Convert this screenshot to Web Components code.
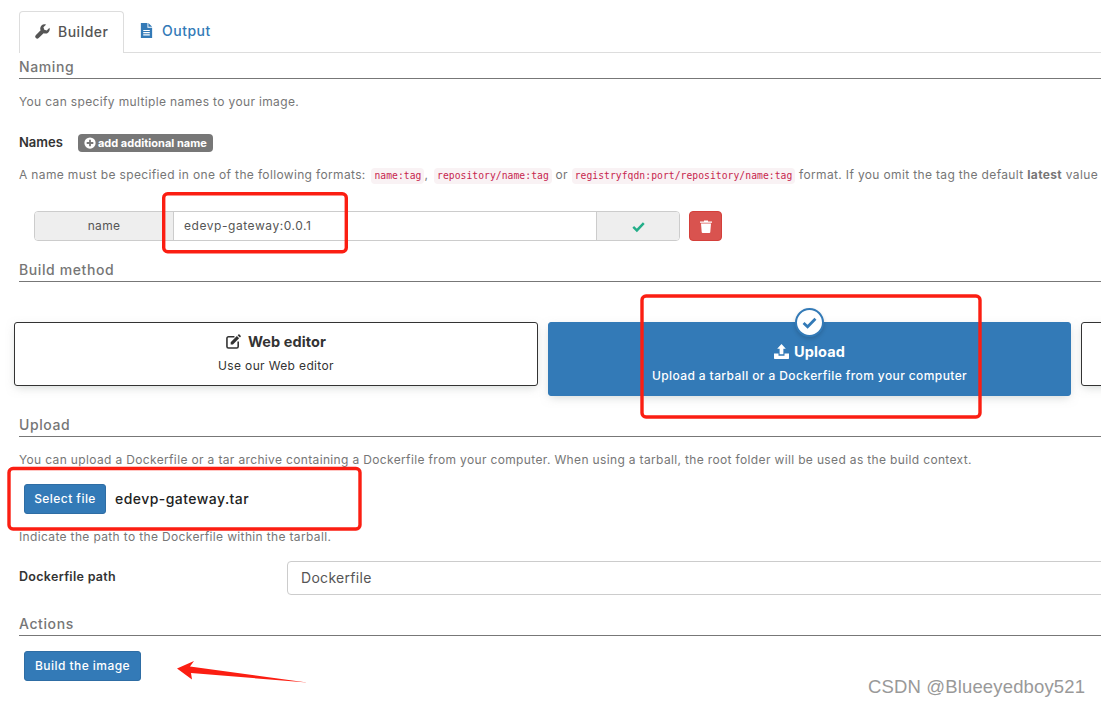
<!DOCTYPE html>
<html>
<head>
<meta charset="utf-8">
<title>Builder</title>
<style>
  html, body { margin: 0; padding: 0; background: #fff; overflow: hidden; }
  body { width: 1101px; height: 707px; font-family: Inter, "Open Sans", sans-serif; color: #767676; }
</style>
</head>
<body>
<builder-page>
  <tab-bar>
    <tab-item active icon="wrench">Builder</tab-item>
    <tab-item icon="file">Output</tab-item>
  </tab-bar>

  <section-title style="--top: 4px">Naming</section-title>
  <help-text style="--top: 15px">You can specify multiple names to your image.</help-text>
  <names-header></names-header>
  <help-text style="--top: 15px">A name must be specified in one of the following formats: <inline-code style="margin-left: 2px">name:tag</inline-code>, <inline-code style="margin-left: 2px">repository/name:tag</inline-code> or <inline-code>registryfqdn:port/repository/name:tag</inline-code> format. If you omit the tag the default <b>latest</b> value</help-text>
  <name-input label="name" value="edevp-gateway:0.0.1"></name-input>

  <section-title style="--top: 19px">Build method</section-title>
  <box-selector>
    <box-item icon="edit" title="Web editor" text="Use our Web editor"></box-item>
    <box-item active icon="upload" title="Upload" text="Upload a tarball or a Dockerfile from your computer"></box-item>
    <box-item></box-item>
  </box-selector>

  <section-title style="--top: 19px">Upload</section-title>
  <help-text style="--top: 15px">You can upload a Dockerfile or a tar archive containing a Dockerfile from your computer. When using a tarball, the root folder will be used as the build context.</help-text>
  <file-picker file="edevp-gateway.tar"></file-picker>
  <help-text style="--top: 15px">Indicate the path to the Dockerfile within the tarball.</help-text>
  <path-field label="Dockerfile path" value="Dockerfile"></path-field>

  <section-title style="--top: 19px">Actions</section-title>
  <blue-button style="margin: 15px 0 0 5px; width: 117px">Build the image</blue-button>
</builder-page>

<red-marks></red-marks>
<water-mark>CSDN @Blueeyedboy521</water-mark>

<script>
const icons = {
  wrench: '<path fill="currentColor" d="M15.4 4.1 12.5 7l-2.6-.9L9 3.5 11.9.6A4.6 4.6 0 0 0 6 6.7L.8 11.9a2.2 2.2 0 0 0 3.1 3.1l5.3-5.2a4.6 4.6 0 0 0 6.2-5.7z"/>',
  file: '<path fill="currentColor" d="M2 0h7v5h5v11H2z"/><path fill="currentColor" d="M10 0l4 4h-4z"/><path stroke="#fff" stroke-width="1.2" d="M4.5 8h7M4.5 10.3h7M4.5 12.6h7"/>',
  edit: '<path fill="none" stroke="currentColor" stroke-width="1.7" d="M9 3H2.6A1.6 1.6 0 0 0 1 4.6v8.8A1.6 1.6 0 0 0 2.6 15h8.8a1.6 1.6 0 0 0 1.6-1.6V8"/><path fill="currentColor" d="M5 8.8 11.6 2.2l2.4 2.4L7.4 11.2H5zM12.4 1.4l.8-.8a.9.9 0 0 1 1.2 0l1.2 1.2a.9.9 0 0 1 0 1.2l-.8.8z"/>',
  upload: '<path fill="currentColor" d="M8 0l4.6 5H10v6H6V5H3.4zM0 10h4.8v2.4h6.4V10H16v5.2a.8.8 0 0 1-.8.8H.8a.8.8 0 0 1-.8-.8z"/>'
}

const fieldBorder = '#ccc'

customElements.define('builder-page', class extends HTMLElement {
  constructor() {
    super()
    this.attachShadow({ mode: 'open' }).innerHTML = `
      <style>
        :host { display: block; width: 1101px; height: 707px; box-sizing: border-box; padding: 11px 0 0 19px; overflow: hidden; }
      </style>
      <slot></slot>`
  }
})

customElements.define('tab-bar', class extends HTMLElement {
  constructor() {
    super()
    this.attachShadow({ mode: 'open' }).innerHTML = `
      <style>
        :host { display: flex; height: 41px; border-bottom: 1px solid #ddd; box-sizing: content-box; }
      </style>
      <slot></slot>`
  }
})

customElements.define('tab-item', class extends HTMLElement {
  constructor() {
    super()
    const active = this.hasAttribute('active')
    const icon = icons[this.getAttribute('icon')]
    this.attachShadow({ mode: 'open' }).innerHTML = `
      <style>
        :host { display: flex; align-items: center; height: 41px; box-sizing: border-box; gap: 8px; padding: 0 15px 2px;
          font-size: 14px; font-weight: 500; letter-spacing: .5px;
          color: ${active ? '#555' : '#337ab7'}; }
        :host([active]) { width: 105px; height: 42px; border: 1px solid #ddd; border-bottom: 0; border-radius: 4px 4px 0 0; background: #fff; }
        svg { width: 15px; height: 15px; flex: none; }
      </style>
      <svg viewBox="0 0 16 16">${icon}</svg><slot></slot>`
  }
})

customElements.define('section-title', class extends HTMLElement {
  constructor() {
    super()
    this.attachShadow({ mode: 'open' }).innerHTML = `
      <style>
        :host { display: block; margin-top: var(--top, 0); height: 21px; line-height: 19px; border-bottom: 1px solid #777;
          font-size: 14px; font-weight: 500; letter-spacing: .6px; color: #767676; box-sizing: content-box; }
      </style>
      <slot></slot>`
  }
})

customElements.define('help-text', class extends HTMLElement {
  constructor() {
    super()
    this.attachShadow({ mode: 'open' }).innerHTML = `
      <style>
        :host { display: block; margin-top: var(--top, 0); height: 16px; line-height: 16px; white-space: nowrap;
          font-size: 12px; letter-spacing: .35px; color: #767676; }
      </style>
      <slot></slot>`
  }
})

customElements.define('inline-code', class extends HTMLElement {
  constructor() {
    super()
    this.attachShadow({ mode: 'open' }).innerHTML = `
      <style>
        :host { display: inline-block; font-family: "DejaVu Sans Mono", monospace; font-size: 9.7px; letter-spacing: .05px; line-height: 16px;
          color: #c7254e; background: #f9f2f4; border-radius: 4px; padding: 0 3px; }
      </style>
      <slot></slot>`
  }
})

customElements.define('names-header', class extends HTMLElement {
  constructor() {
    super()
    this.attachShadow({ mode: 'open' }).innerHTML = `
      <style>
        :host { display: flex; align-items: center; gap: 15px; height: 18px; margin-top: 24px; }
        b { font-size: 13px; font-weight: 600; color: #333; margin-bottom: 2px; }
        span { display: flex; align-items: center; gap: 2px; height: 18px; box-sizing: border-box; padding: 0 6px 1px 6px; border-radius: 4px;
          background: #777; color: #fff; font-size: 11px; font-weight: 700; letter-spacing: .03px; }
        svg { width: 12px; height: 12px; }
      </style>
      <b>Names</b>
      <span><svg viewBox="0 0 16 16"><circle cx="8" cy="8" r="7.5" fill="#fff"/><path stroke="#777" stroke-width="2.4" d="M8 3.6v8.8M3.6 8h8.8"/></svg>add additional name</span>`
  }
})

customElements.define('name-input', class extends HTMLElement {
  constructor() {
    super()
    this.attachShadow({ mode: 'open' }).innerHTML = `
      <style>
        :host { display: flex; align-items: stretch; height: 30px; margin: 28px 0 0 15px; font-size: 12px; color: #555; }
        .group { display: flex; width: 646px; border: 1px solid ${fieldBorder}; border-radius: 4px; box-sizing: border-box; overflow: hidden; }
        .label { width: 139px; background: #eee; border-right: 1px solid ${fieldBorder}; display: flex; align-items: center; justify-content: center; flex: none; letter-spacing: .3px; padding-bottom: 2px; box-sizing: border-box; }
        .value { width: 422px; padding: 0 0 2px 10px; box-sizing: border-box; display: flex; align-items: center; background: #fff; letter-spacing: .55px; flex: none; }
        .state { flex: 1; background: #eee; border-left: 1px solid ${fieldBorder}; display: flex; align-items: center; justify-content: center; }
        .state svg { width: 13px; height: 13px; }
        .remove { width: 33px; margin-left: 9px; background: #d9534f; border: 1px solid #d43f3a; border-radius: 4px; box-sizing: border-box; display: flex; align-items: center; justify-content: center; }
        .remove svg { width: 12px; height: 13px; }
      </style>
      <div class="group">
        <div class="label">${this.getAttribute('label')}</div>
        <div class="value">${this.getAttribute('value')}</div>
        <div class="state"><svg viewBox="0 0 16 16"><path fill="none" stroke="#23ae89" stroke-width="3" d="M1.5 8.5l4.500 4.300 8.500-9"/></svg></div>
      </div>
      <div class="remove"><svg viewBox="0 0 12 13"><path fill="#fff" d="M0 1.4h4V.4h4v1h4v1.4H0zM1 3.600h10l-.7 8.400a1 1 0 0 1-1 1H2.700a1 1 0 0 1-1-1z"/></svg></div>`
  }
})

customElements.define('box-selector', class extends HTMLElement {
  constructor() {
    super()
    this.attachShadow({ mode: 'open' }).innerHTML = `
      <style>
        :host { display: flex; align-items: flex-start; gap: 10px; width: 1600px; margin: 40px 0 0 -5px; }
      </style>
      <slot></slot>`
  }
})

customElements.define('box-item', class extends HTMLElement {
  constructor() {
    super()
    const icon = icons[this.getAttribute('icon')]
    const title = this.getAttribute('title')
    const active = this.hasAttribute('active')
    this.attachShadow({ mode: 'open' }).innerHTML = `
      <style>
        :host { display: block; position: relative; flex: none; width: 524px; height: 64px; box-sizing: border-box; border: 1px solid #333; border-radius: 3px;
          background: #fff; color: #333; text-align: center; box-shadow: 0 3px 10px -2px rgba(161,170,166,.5); }
        :host([active]) { width: 523px; height: 74px; border-color: #337ab7; background: #337ab7; color: #fff; }
        .title { display: flex; align-items: center; justify-content: center; gap: 7px; margin-top: 9px; height: 18px; font-size: 14.500px; font-weight: 700; letter-spacing: .1px; }
        :host([active]) .title { margin-top: 19px; gap: 5px; }
        .title svg { width: 15px; height: 15px; }
        .text { margin-top: 8px; font-size: 12px; letter-spacing: .35px; line-height: 16px; }
        :host([active]) .text { font-weight: 500; margin-top: 8px; letter-spacing: .4px; }
        .badge { position: absolute; left: 246px; top: -15px; width: 29px; height: 29px; box-sizing: border-box; border: 2px solid #337ab7; border-radius: 50%; background: #fff;
          display: flex; align-items: center; justify-content: center; box-shadow: 0 2px 4px rgba(0,0,0,.15); }
        .badge svg { width: 17px; height: 17px; }
      </style>
      ${active ? '<div class="badge"><svg viewBox="0 0 16 16"><path fill="none" stroke="#337ab7" stroke-width="2.6" d="M2.4 8.4l3.800 3.600 7.400-7.600"/></svg></div>' : ''}
      ${title ? `<div class="title"><svg viewBox="0 0 16 16">${icon}</svg>${title}</div><div class="text">${this.getAttribute('text')}</div>` : ''}`
  }
})

customElements.define('blue-button', class extends HTMLElement {
  constructor() {
    super()
    this.attachShadow({ mode: 'open' }).innerHTML = `
      <style>
        :host { display: flex; align-items: center; justify-content: center; height: 30px; box-sizing: border-box; padding-bottom: 2px; border: 1px solid #2e6da4; border-radius: 3px;
          background: #337ab7; color: #fff; font-size: 12px; font-weight: 500; letter-spacing: .45px; }
      </style>
      <slot></slot>`
  }
})

customElements.define('file-picker', class extends HTMLElement {
  constructor() {
    super()
    this.attachShadow({ mode: 'open' }).innerHTML = `
      <style>
        :host { display: flex; align-items: center; gap: 9px; margin: 16px 0 0 5px; height: 30px; }
        blue-button { width: 82px; }
        span { font-size: 14px; font-weight: 500; letter-spacing: .45px; color: #222; margin-bottom: 2px; }
      </style>
      <blue-button>Select file</blue-button><span>${this.getAttribute('file')}</span>`
  }
})

customElements.define('path-field', class extends HTMLElement {
  constructor() {
    super()
    this.attachShadow({ mode: 'open' }).innerHTML = `
      <style>
        :host { display: flex; margin-top: 16px; height: 34px; }
        label { width: 268px; flex: none; font-size: 12.500px; font-weight: 600; letter-spacing: .3px; color: #333; line-height: 32px; }
        div { width: 900px; flex: none; box-sizing: border-box; border: 1px solid ${fieldBorder}; border-radius: 4px; padding-left: 13px; line-height: 32px; font-size: 14px; letter-spacing: .3px; color: #555; }
      </style>
      <label>${this.getAttribute('label')}</label><div>${this.getAttribute('value')}</div>`
  }
})

customElements.define('red-marks', class extends HTMLElement {
  constructor() {
    super()
    this.attachShadow({ mode: 'open' }).innerHTML = `
      <style>
        :host { display: block; position: absolute; left: 0; top: 0; width: 1101px; height: 707px; pointer-events: none; }
        svg { display: block; }
        rect { fill: none; stroke: #fb1e12; stroke-width: 3.4; }
      </style>
      <svg width="1101" height="707" viewBox="0 0 1101 707">
        <rect x="163.7" y="193.7" width="182.6" height="58" rx="4"/>
        <rect x="642" y="296" width="338" height="121" rx="4"/>
        <rect x="9" y="468.500" width="351" height="60.500" rx="4"/>
        <polygon fill="#fb1e12" points="177,668.500 194,661 190,666.500 307,682.500 191,673 192,679.500"/>
      </svg>`
  }
})

customElements.define('water-mark', class extends HTMLElement {
  constructor() {
    super()
    this.attachShadow({ mode: 'open' }).innerHTML = `
      <style>
        :host { display: block; position: absolute; left: 868px; top: 676px; font-family: "Liberation Sans", Arial, sans-serif; font-size: 18.5px; line-height: 21px; color: #999; letter-spacing: .15px; white-space: nowrap; }
      </style>
      <slot></slot>`
  }
})
</script>
</body>
</html>
